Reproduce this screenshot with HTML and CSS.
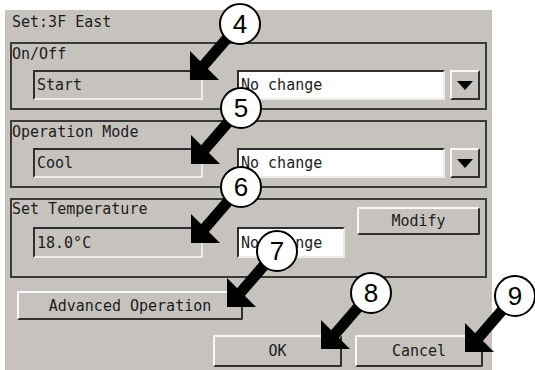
FILE: index.html
```html
<!DOCTYPE html>
<html lang="en">
<head>
    <meta charset="UTF-8">
    <meta name="viewport" content="width=device-width, initial-scale=1.0">
    <title>Set:3F East</title>
    <link rel="stylesheet" href="styles.css">
</head>
<body>
    <div class="page">
        <div class="dialog">
            <div class="title">Set:3F East</div>

            <div class="group">
                <div class="label">On/Off</div>
                <div class="row">
                    <div class="field">Start</div>
                    <div class="field white">No change</div>
                    <div class="drop"><span class="tri"></span></div>
                </div>
            </div>

            <div class="group">
                <div class="label">Operation Mode</div>
                <div class="row">
                    <div class="field">Cool</div>
                    <div class="field white">No change</div>
                    <div class="drop"><span class="tri"></span></div>
                </div>
            </div>

            <div class="group temp">
                <div class="temp-main">
                    <div class="label">Set Temperature</div>
                    <div class="row">
                        <div class="field tall">18.0°C</div>
                        <div class="field white tall short">No change</div>
                    </div>
                </div>
                <div class="btn modify">Modify</div>
            </div>

            <div class="btn advanced">Advanced Operation</div>

            <div class="footer">
                <div class="btn ok">OK</div>
                <div class="btn cancel">Cancel</div>
            </div>
        </div>

        <!-- numbered callouts drawn over the dialog -->
        <svg class="marks" width="535" height="370" viewBox="0 0 535 370">
            <defs>
                <g id="mark">
                    <line x1="8" y1="-8" x2="46" y2="-52" stroke="#000" stroke-width="11"/>
                    <polygon points="0,0 0,-29 29,0" fill="#000"/>
                    <circle cx="50" cy="-56" r="20" fill="#fff" stroke="#000" stroke-width="2"/>
                </g>
            </defs>
            <g transform="translate(190,80)"><use href="#mark"/><text x="50" y="-47">4</text></g>
            <g transform="translate(191,164)"><use href="#mark"/><text x="50" y="-47">5</text></g>
            <g transform="translate(191,243)"><use href="#mark"/><text x="50" y="-47">6</text></g>
            <g transform="translate(227,307)"><use href="#mark"/><text x="50" y="-47">7</text></g>
            <g transform="translate(321,349)"><use href="#mark"/><text x="50" y="-47">8</text></g>
            <g transform="translate(465,352)"><use href="#mark"/><text x="50" y="-47">9</text></g>
        </svg>
    </div>
</body>
</html>
```

FILE: styles.css
```css
body{
    margin: 0;
    background-color: #fff;
    font-family: "DejaVu Sans Mono", "Liberation Mono", monospace;
    font-size: 15px;
    color: #1c1c1c;
}
.page{
    position: relative;
    width: 535px;
    height: 370px;
    padding-top: 10px;
    box-sizing: border-box;
}
.dialog{
    margin-left: 5px;
    width: 487px;
    height: 360px;
    box-sizing: border-box;
    padding: 4px 0 0 5px;
    background-color: #c6c3bf;
}
.title{
    line-height: 16px;
    height: 16px;
    padding-left: 2px;
}
.group{
    width: 477px;
    box-sizing: border-box;
    margin-top: 12px;
    border: 2px solid #3a3a3a;
    padding: 2px 5px 8px 0;
}
.group + .group{
    margin-top: 10px;
}
.label{
    line-height: 16px;
    height: 16px;
}
.row{
    display: flex;
    margin-top: 8px;
    margin-left: 21px;
}
.field{
    display: flex;
    align-items: center;
    width: 170px;
    height: 30px;
    box-sizing: border-box;
    padding-left: 2px;
    border: 2px solid;
    border-color: #2e2e2e #ecebe9 #ecebe9 #2e2e2e;
}
.field.white{
    width: 208px;
    margin-left: 34px;
    background-color: #fff;
}
.field.tall{
    height: 31px;
}
.field.short{
    width: 108px;
}
.drop{
    display: flex;
    align-items: center;
    justify-content: center;
    width: 30px;
    height: 30px;
    margin-left: 5px;
    box-sizing: border-box;
    border: 2px solid;
    border-color: #f6f6f6 #303030 #303030 #f6f6f6;
}
.tri{
    width: 0;
    height: 0;
    border-left: 8px solid transparent;
    border-right: 8px solid transparent;
    border-top: 9px solid #000;
}
.temp{
    display: flex;
    padding-top: 1px;
    padding-bottom: 18px;
}
.temp-main{
    flex: 1;
}
.temp .row{
    margin-top: 10px;
}
.btn{
    display: flex;
    align-items: center;
    justify-content: center;
    box-sizing: border-box;
    border: 2px solid;
    border-color: #f8f8f8 #303030 #303030 #f8f8f8;
    border-radius: 2px;
}
.modify{
    width: 123px;
    height: 28px;
    margin-top: 6px;
}
.advanced{
    width: 226px;
    height: 29px;
    margin-top: 13px;
    margin-left: 7px;
}
.footer{
    display: flex;
    margin-top: 15px;
}
.ok{
    width: 129px;
    height: 32px;
    margin-left: 203px;
}
.cancel{
    width: 128px;
    height: 32px;
    margin-left: 13px;
}
.marks{
    position: absolute;
    left: 0;
    top: 0;
    pointer-events: none;
}
.marks text{
    font-family: "Liberation Sans", Arial, sans-serif;
    font-size: 26px;
    text-anchor: middle;
    fill: #000;
}
```
